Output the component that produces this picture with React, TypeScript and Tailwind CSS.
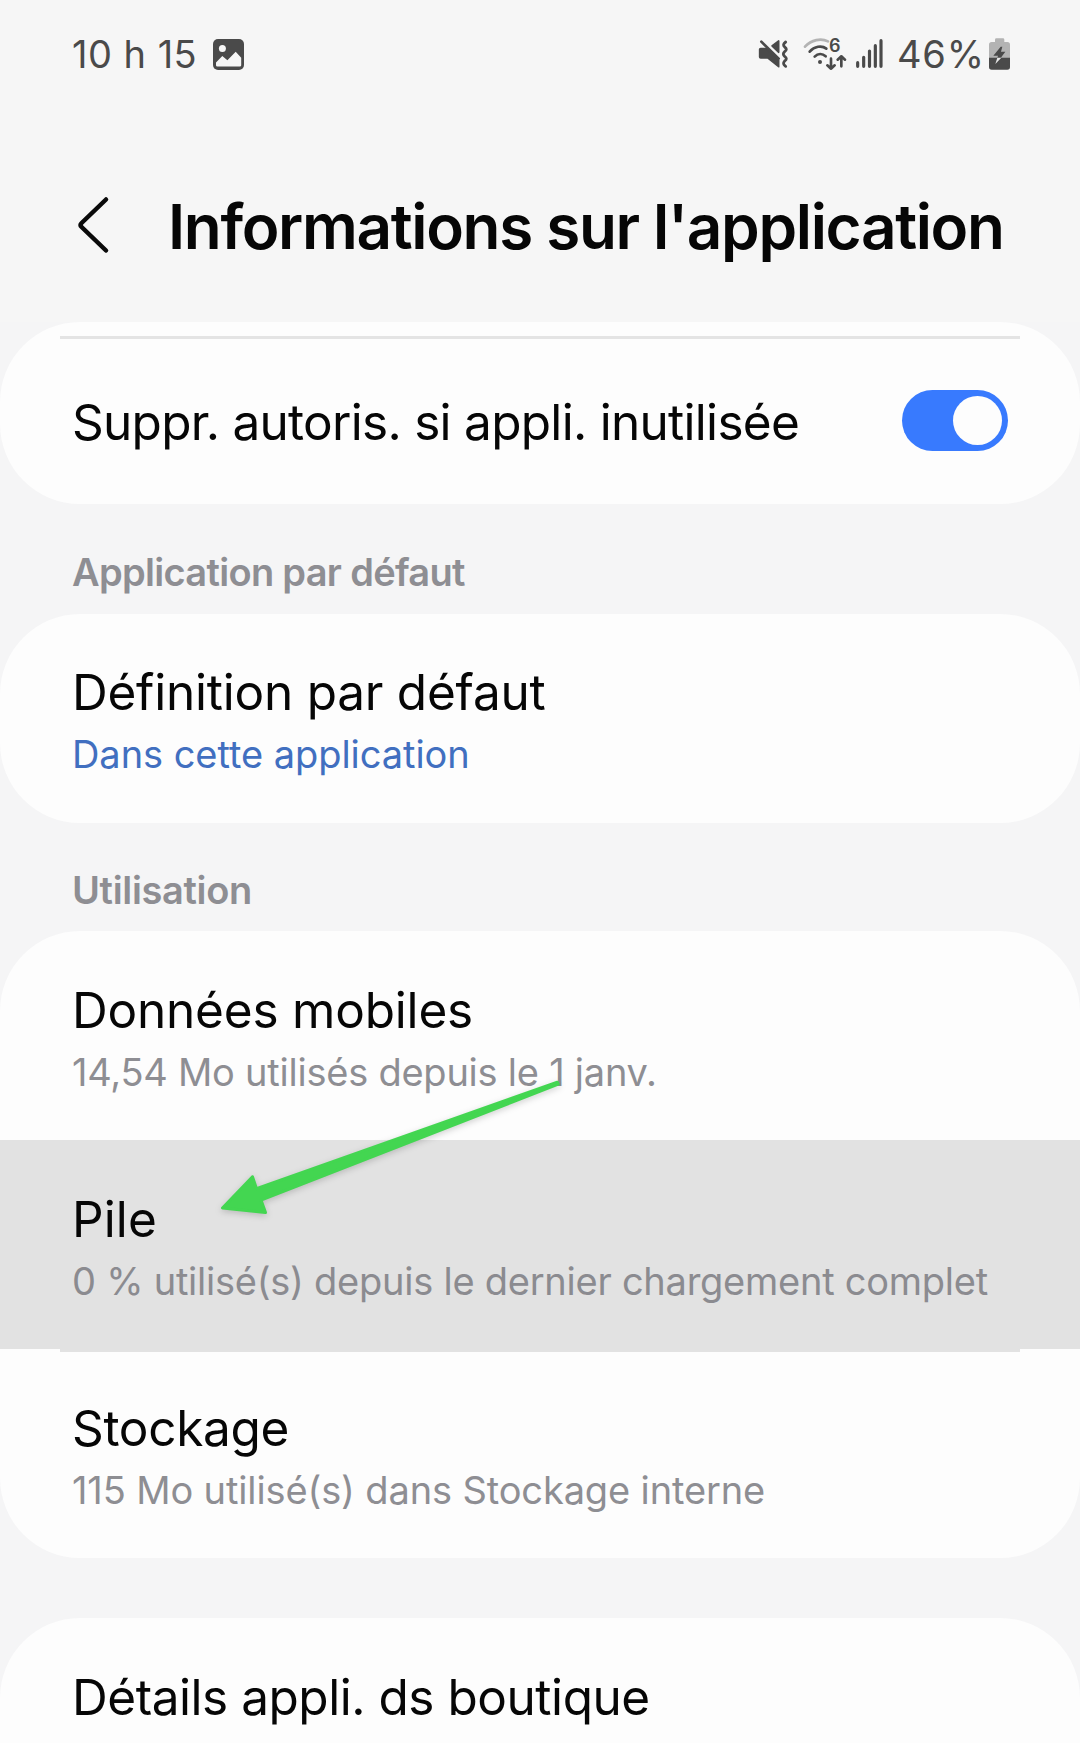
import type { ReactNode } from "react";

const INK = "#4a4a4a";

function PictureIcon() {
  return (
    <svg className="h-[31px] w-[31px]" viewBox="0 0 31 31">
      <rect width="31" height="31" rx="5" fill={INK} />
      <circle cx="9.4" cy="9.4" r="3.5" fill="#f6f6f6" />
      <path d="M3 23.4 9.3 16.9 14.4 21.2 22.7 12.8 28.2 18.8V26.2Q28.2 27.6 26.8 27.6H4.4Q3 27.6 3 26.2Z" fill="#f6f6f6" />
    </svg>
  );
}

function MuteVibrateIcon() {
  return (
    <svg className="h-8 w-8" viewBox="52 52 96 96" fill={INK} stroke={INK} strokeLinejoin="round" strokeLinecap="round">
      <path d="M114 61V95L94 76Z" strokeWidth="5" />
      <path d="M57 86Q57 84 60 84H78L114 119V138L82 112H60Q57 112 57 109Z" strokeWidth="5" />
      <path d="M62 63 114 114" fill="none" strokeWidth="8" />
      <path d="M88 77 120 108" fill="none" stroke="#f6f6f6" strokeWidth="3.500" />
      <path d="M135 64Q124 72 132 79 142 86 132 93 124 100 132 107 142 114 132 121 124 129 135 137" fill="none" strokeWidth="8.500" />
    </svg>
  );
}

function WifiIcon() {
  return (
    <svg className="h-8 w-[46px] overflow-visible" viewBox="186 52 138 96" fill="none" stroke={INK} strokeWidth="8" strokeLinecap="round" strokeLinejoin="round">
      <path d="M192 78C211 57 240 52 261 62" stroke="#b3b3b3" />
      <path d="M206 93C220 77 242 73 256 84" />
      <path d="M221 108C231 98 244 98 254 107" />
      <circle cx="237" cy="124" r="6" fill={INK} stroke="none" />
      <text x="264" y="94" fontFamily="Inter, sans-serif" fontSize="54" fontWeight="600" fill={INK} stroke="none">6</text>
      <path d="M270 114V144M259 134 270 144 281 134" />
      <path d="M301 137V107M290 117 301 107 312 117" />
    </svg>
  );
}

function SignalIcon() {
  return (
    <svg className="h-8 w-[27px]" viewBox="345 52 81 96" stroke={INK} strokeWidth="9.5" strokeLinecap="round">
      <path d="M350 126V137M368 110V137M385.500 91V137M403 75V137M420 60V137" />
    </svg>
  );
}

function BatteryIcon() {
  return (
    <svg className="h-8 w-[21px]" viewBox="744 52 63 96">
      <path d="M762 64V57Q762 53 766 53H786Q790 53 790 57V64H799Q807 64 807 72V112H744V72Q744 64 752 64Z" fill="#b3b3b3" />
      <path d="M744 111H807V139Q807 147 799 147H752Q744 147 744 139Z" fill={INK} />
      <path d="M779 78 757 105H771L769 112H779L793 93H780L784 78Z" fill={INK} />
      <path d="M769 111 763 130 781 111Z" fill="#e8e8e8" />
    </svg>
  );
}

function Card({ children, className = "" }: { children: ReactNode; className?: string }) {
  return <section className={"shrink-0 overflow-hidden bg-[#fdfdfd] " + className}>{children}</section>;
}

function Row({ title, subtitle, className = "", titleClass = "", subClass = "" }: {
  title: string;
  subtitle?: string;
  className?: string;
  titleClass?: string;
  subClass?: string;
}) {
  return (
    <div className={"pl-[72px] whitespace-nowrap " + className}>
      <div className={"text-[49.5px] leading-[66px] text-[#060606] " + titleClass}>{title}</div>
      {subtitle && <div className={"text-[38px] leading-[58px] " + subClass}>{subtitle}</div>}
    </div>
  );
}

export default function App() {
  return (
    <main className="relative flex h-[1743px] w-[1080px] flex-col overflow-hidden bg-[#f5f5f6] font-['Inter',sans-serif]">
      <header className="h-[322px] shrink-0 bg-[#f6f6f6]">
        <div className="flex h-[108px] items-center justify-between pr-[70px] pl-[72px] text-[38px] text-[#4a4a4a]">
          <div className="flex items-center gap-[16px]">
            <span className="tracking-[0.48px]">10 h 15</span>
            <PictureIcon />
          </div>
          <div className="flex items-center">
            <MuteVibrateIcon />
            <span className="ml-[13px] flex"><WifiIcon /></span>
            <span className="ml-[7px] flex"><SignalIcon /></span>
            <span className="ml-[14px] w-[92px] tracking-[0.8px]">46%</span>
            <BatteryIcon />
          </div>
        </div>
        <div className="flex h-[236px] items-center pb-[3px] pl-[76px]">
          <svg className="mr-[56px] h-[60px] w-9" viewBox="0 0 36 60" fill="none" stroke="#0a0a0a" strokeWidth="4.500" strokeLinecap="round" strokeLinejoin="round">
            <path d="M30 4.500 5.600 28Q3.600 30 5.600 32L30 55.500" />
          </svg>
          <h1 className="pt-[4px] text-[62px] leading-[80px] font-semibold tracking-[-1.34px] whitespace-nowrap text-[#060606]">Informations sur l'application</h1>
        </div>
      </header>

      <Card className="h-[182px] rounded-[80px]">
        <div className="mx-[60px] mt-[14px] h-[3px] bg-[#e4e4e4]" />
        <div className="flex items-center justify-between pt-[50px] pr-[72px]">
          <Row title="Suppr. autoris. si appli. inutilisée" titleClass="tracking-[-0.71px]" />
          <div className="mb-[3px] flex h-[61px] w-[106px] items-center justify-end rounded-full bg-[#387afe] pr-1.5">
            <div className="h-[49px] w-[49px] rounded-full bg-[#fdfdfd]" />
          </div>
        </div>
      </Card>

      <h2 className="h-[110px] shrink-0 pt-[40px] pl-[72px] text-[38px] leading-[56px] font-semibold tracking-[-0.69px] text-[#8e8e93]">Application par défaut</h2>

      <Card className="h-[209px] rounded-[80px]">
        <Row title="Définition par défaut" subtitle="Dans cette application" className="pt-[45px]" titleClass="tracking-[-0.23px]" subClass="tracking-[-0.05px] text-[#416fc0]" />
      </Card>

      <h2 className="h-[108px] shrink-0 pt-[39px] pl-[72px] text-[38px] leading-[56px] font-semibold tracking-[-0.34px] text-[#8e8e93]">Utilisation</h2>

      <Card className="h-[627px] rounded-[80px]">
        <Row title="Données mobiles" subtitle="14,54 Mo utilisés depuis le 1 janv." className="h-[209px] pt-[46px]" titleClass="tracking-[-0.2px]" subClass="tracking-[-0.24px] text-[#8e8e93]" />
        <Row title="Pile" subtitle="0 % utilisé(s) depuis le dernier chargement complet" className="h-[209px] bg-[#e2e2e2] pt-[46px]" titleClass="tracking-[0.1px]" subClass="tracking-[-0.25px] text-[#8b8b90]" />
        <div className="mx-[60px] h-[3px] bg-[#e2e2e2]" />
        <Row title="Stockage" subtitle="115 Mo utilisé(s) dans Stockage interne" className="pt-[43px]" titleClass="tracking-[-0.31px]" subClass="tracking-[-0.13px] text-[#8e8e93]" />
      </Card>

      <Card className="mt-[60px] h-[125px] rounded-t-[80px]">
        <Row title="Détails appli. ds boutique" className="pt-[46px]" titleClass="tracking-[-0.46px]" />
      </Card>

      <svg className="absolute top-[1070px] left-[210px] h-[160px] w-[360px] drop-shadow-[0_2px_3px_rgba(0,0,0,0.18)]" viewBox="210 1070 360 160" fill="#43d651" stroke="#43d651" strokeWidth="3" strokeLinejoin="round">
        <path d="M557.300 1082.200 256.500 1188.700 252.500 1176.700 222.500 1208 265.500 1212.500 261 1200 558.300 1084.200Z" />
      </svg>
    </main>
  );
}
